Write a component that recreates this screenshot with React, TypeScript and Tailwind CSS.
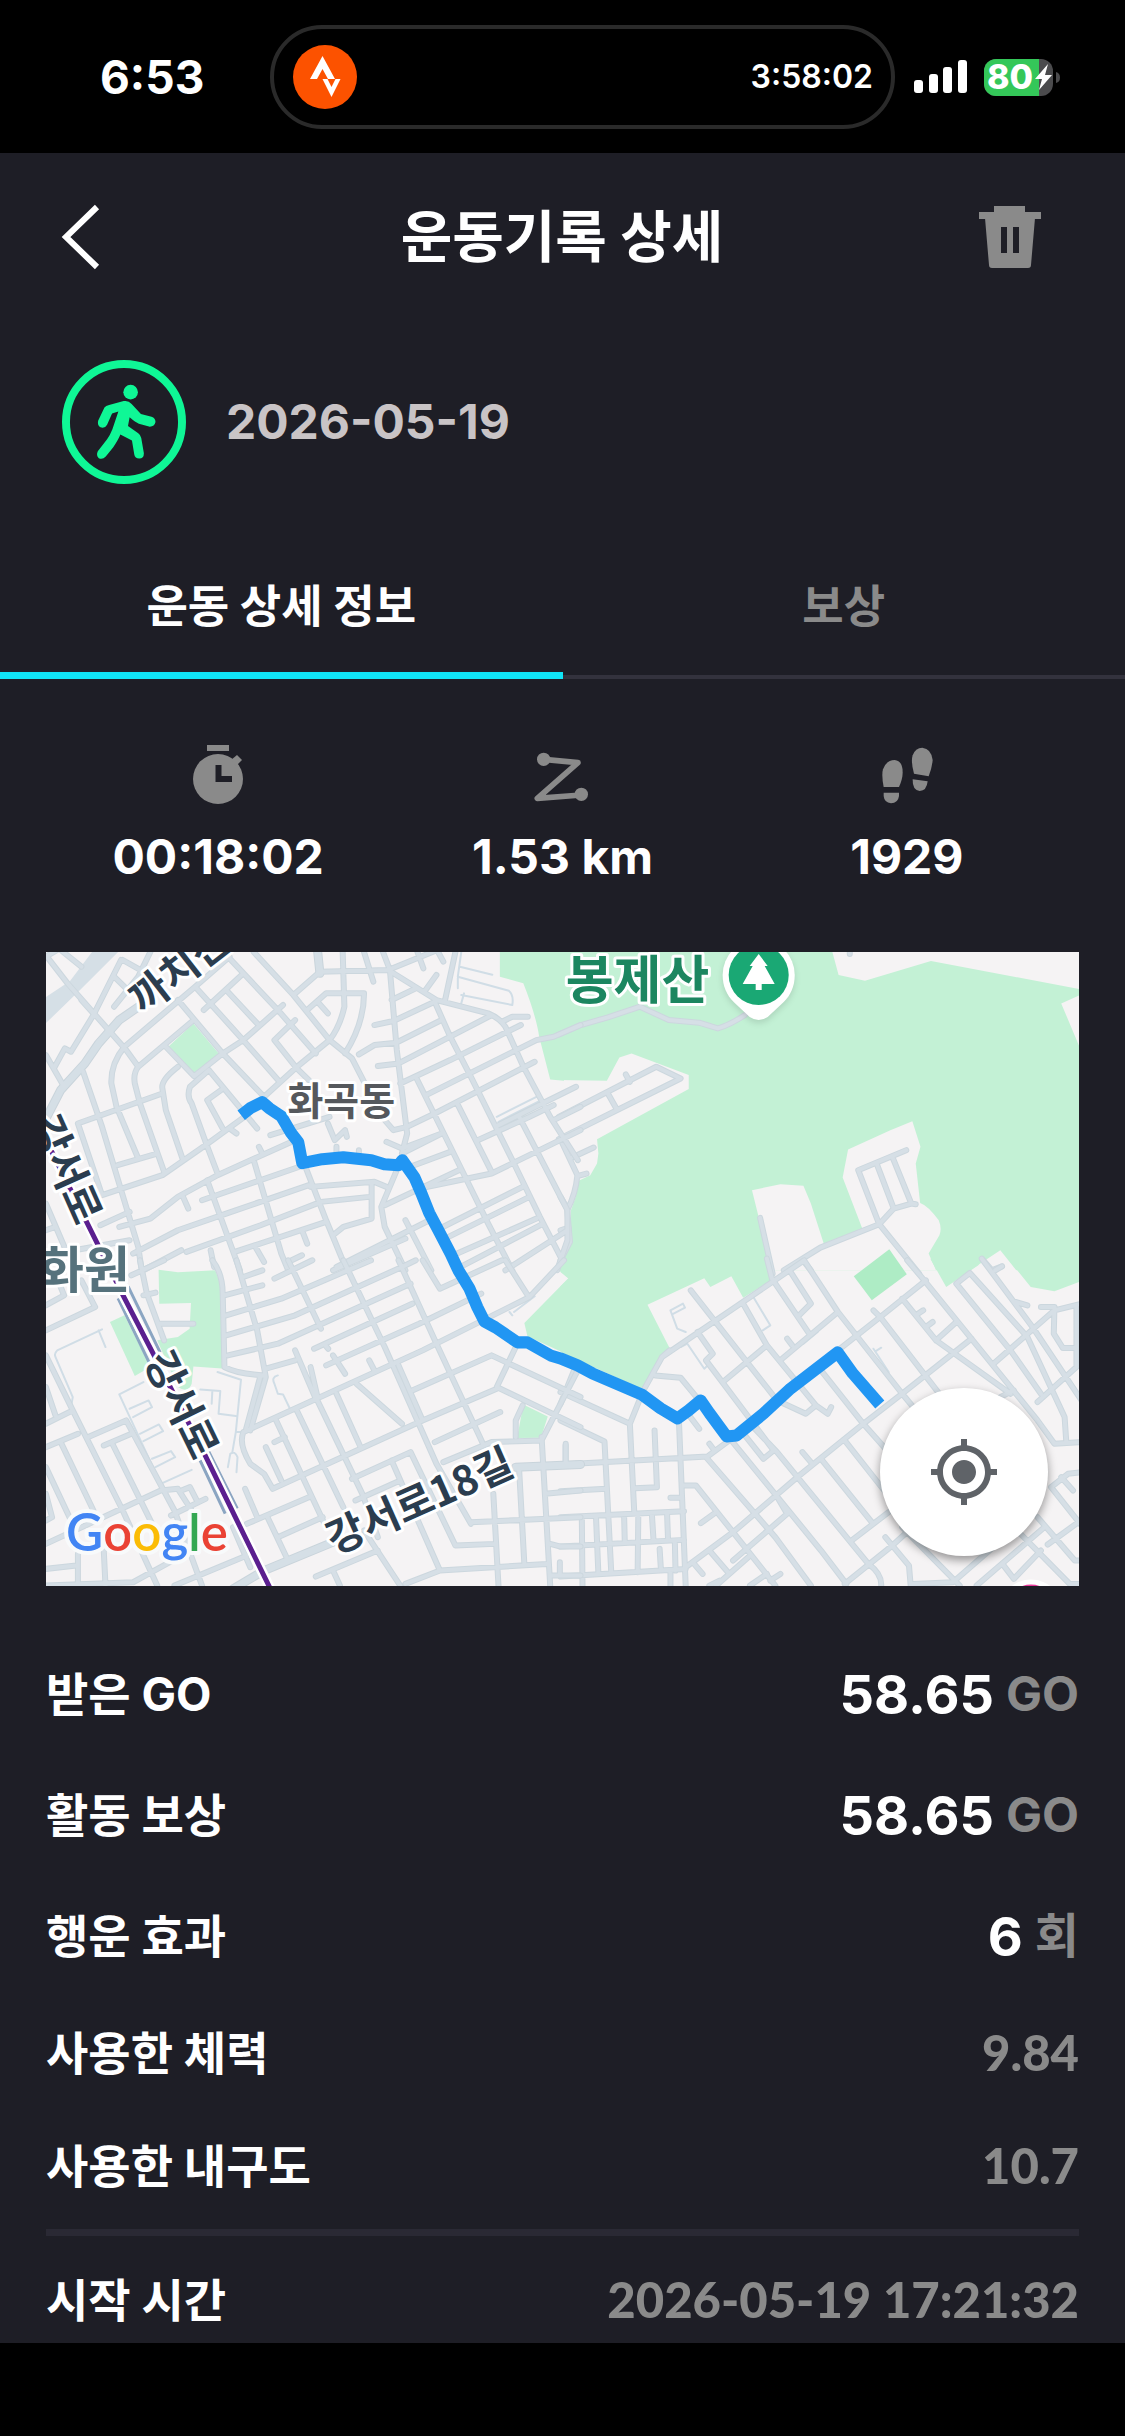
import React, { useState } from 'react'
import { MdMyLocation } from 'react-icons/md'

type TabKey = 'detail' | 'reward'

const TABS: { key: TabKey; label: string }[] = [
  { key: 'detail', label: '운동 상세 정보' },
  { key: 'reward', label: '보상' },
]

const REWARDS: { label: string; value: string; unit: string }[] = [
  { label: '받은 GO', value: '58.65', unit: 'GO' },
  { label: '활동 보상', value: '58.65', unit: 'GO' },
  { label: '행운 효과', value: '6', unit: '회' },
]

const COSTS: { label: string; value: string }[] = [
  { label: '사용한 체력', value: '9.84' },
  { label: '사용한 내구도', value: '10.7' },
]

/* ---------- Map data ---------- */

interface Tile {
  transform: string
  land?: string
  parks: string
  roads: string
  wide?: string
  thin?: string
}

// Each tile keeps its own coordinate grid, the transform puts it on the map
const TILES: Tile[] = [
  {
    transform: 'translate(560 940) scale(.338 .3333)',
    parks: 'M0 30H1540V990H0Z',
    land:
      'M802 30L822 105L900 122L1095 63L1540 148V30Z M1540 163L1480 190L1540 335Z ' +
      'M-10 420L137 422L174 352L210 340L379 405V447L108 597L112 640L108 670L88 705L54 722L35 830L32 900L10 960L-10 990Z ' +
      'M566 750L650 732L718 737L740 790L778 910L892 865L834 712L850 628L975 570L1040 543L1064 620L1050 670L1063 788Q1085 795 1118 840Q1128 865 1120 885L1088 940L1110 990H625Z ' +
      'M1205 994L1300 930L1350 994Z',
    roads:
      'M-5 283L60 255L140 232L235 200L320 240L410 248L465 265Q500 255 545 225 M-5 530L283 380L355 415L-5 597 M140 460L165 505 M193 403L205 425 ' +
      'M0 597L50 705Q45 760 20 810L28 905L0 960 M28 655L98 622 M50 708L77 700 M0 770L20 805 M0 870L25 862 M590 833L627 1000 ' +
      'M660 990L768 922L942 852L1060 1000 M880 690L942 852L985 805L1037 790L1050 792 M880 690L1022 630 M935 672L985 805 M983 655L1037 790 ' +
      'M720 965L740 990 M1248 958L1275 990L1305 978 M855 36L855 42',
  },
  {
    transform: 'translate(40 940) scale(.3444 .3333)',
    parks:
      'M372 320L445 250L522 345L447 408Z M1334 30V110L1402 130Q1440 230 1448 290L1480 418L1520 422V30Z M1568 730L1540 810V900L1500 994H1568Z',
    roads:
      'M20 50L80 130L250 330L285 380 M60 30L120 80 M17 50L50 30 M120 180L155 220 M235 60L155 225L90 335L72 325L40 385 M215 110L255 150 M240 60L300 95 M320 36L285 110L215 200 ' +
      'M17 345L70 440 M450 140L245 320Q205 370 207 430L222 500L285 655 M440 245L285 380Q270 400 275 430L290 490L360 695 M400 380Q350 420 355 445L365 510L415 660 ' +
      'M125 395L180 560L285 920L295 990 M110 550L355 460 M110 550L180 765L355 705L480 615L600 525 M225 675L340 640 M365 320L447 408L530 340L590 300L705 195 ' +
      'M490 390L435 440Q425 470 440 490L482 610L515 700 M525 450L485 480L530 565 M550 565L570 580 M400 180L530 340L650 470 M450 140L585 295L695 425 M540 150L630 250 ' +
      'M545 50L690 210L800 340 M590 100L475 210 M450 140L550 50 M620 36L735 165L840 300L905 355L940 425 M490 390L630 565 M650 470L740 385L840 300 ' +
      'M740 240L680 300L745 385L780 420 M735 165L812 95L1010 90L1200 10 M878 36L883 200Q870 260 840 300 M775 210L830 160L940 160Q940 250 885 340 M805 185L835 220 ' +
      'M940 36L967 125 M995 36L1015 90L1035 330L1065 580L1050 640 M1010 90L1150 180L1300 220Q1335 235 1350 260L1400 375L1480 530L1560 660 M1205 36L1175 180 M1095 36L1112 85 M1155 36L1170 65 M1115 155L1150 105 ' +
      'M1020 180L1090 145 M970 255L1025 243L1145 185 M925 343L970 315L1033 308L1165 240 M980 378L1040 370L1305 228 M1340 245L1370 230H1415 M1045 430L1190 360L1395 255 ' +
      'M1145 185L1190 290L1250 410L1375 670L1450 830L1510 950 M1090 410L1200 640L1300 850L1370 990 M1120 465L1440 300L1490 290L1568 255 M1145 520L1435 365 M1000 540L1025 570L1065 560L1145 520 ' +
      'M1050 640L1165 580 M1210 490L1310 695 M1390 530L1530 810V900L1500 990 M1330 555L1555 440 M1270 600L1420 530L1490 495 M1310 700L1568 570 M1060 685L1190 635 M1100 745L1310 700 M1490 540L1568 500 ' +
      'M1000 795L1215 690 M1150 870L1400 740 M1185 890L1420 770 M1210 940L1440 835 M1220 980L1460 850 M1350 990L1530 870 M860 980L1130 840 M850 990L1060 895 ' +
      'M230 860L320 835L400 770L515 705L740 600 M470 780L780 670 M270 940L400 870L540 820L780 735 M300 990L410 930 M425 935L640 855L815 785L955 770 ' +
      'M565 935L830 845 M620 660L700 940L720 990 M485 720L580 990 M770 680L830 840L890 990 M785 740L970 725L1005 740 M962 730V835L880 860L850 885 M1035 690L990 800L1000 860L1060 990 M1060 840L1135 990 ' +
      'M635 620L645 640 M760 870L775 910 M625 920L650 965 M730 960L760 945 M495 930L505 980 M415 770L430 805 M668 585L840 530 M835 550L855 600L885 570L890 590 M860 620V640 M925 630V640 M1005 605L1050 625L1165 580 ' +
      'M17 790L75 930 M17 870L45 860 M175 855L260 815 M100 930L260 900',
    wide: 'M5 560L60 450L130 370L170 310L230 240L300 190 M805 30L812 100',
    thin:
      'M1222 36L1212 110L1360 152Q1375 165 1370 195L1222 165 M1230 160L1222 190 M1212 115L1212 145 M1218 80L1312 104 M1325 530L1440 470 M1330 545L1450 482',
  },
  {
    transform: 'translate(560 1260) scale(.338 .3333)',
    parks:
      'M0 -5V35L24 55L0 78V275L245 388L300 290L322 262L257 133L425 54L443 80L505 48L540 112L622 60L610 -5Z M1093 -5L1140 80L1235 15L1244 -5Z M1322 -5L1390 80L1460 93L1540 62V-5Z',
    roads:
      'M610 -5L625 55 M300 290L720 0 M322 270L300 290L245 390L205 490L218 755 M0 395L205 490 M40 330L0 430 M0 480L130 543L150 935 M0 612L435 588L505 535 M820 270L945 170L1080 60 ' +
      'M370 920L510 815L700 650L895 490L1010 400L1215 235 M840 970L975 860L1040 800 M480 365L610 255 M655 295L820 155 M860 840L970 755 M1280 310L1325 270L1460 150L1540 130 M1410 425L1525 320V140 M1110 240L1170 185 ' +
      'M385 90L640 420L725 460L755 435 M405 215L450 280L430 300L630 570L600 595L545 525 M540 130L610 255L755 435L790 460L800 440 M625 55L735 220 M680 35L740 130L705 165 M720 0L820 155L1010 400L1140 560 M770 330L895 490 ' +
      'M1025 0L1075 60L1410 480L1460 550L1540 545 M1245 -5L1395 200L1540 420 M1170 70L1210 38L1380 230L1490 470L1495 545 M1170 70L1330 270L1420 400 M1010 115L1110 240L1330 400 M925 150L945 170L1150 440 ' +
      'M1050 165L1072 150 M1080 200L1100 185 M1285 30L1305 18 M1345 125L1380 135 M1420 140H1460L1458 220L1485 263H1525 ' +
      'M430 590L635 830L740 975 M505 540L770 870L845 970 M570 500L640 575L910 910Q950 940 948 975 M770 595L920 785 M715 575L740 605 M840 540L980 720 M895 490L1000 610 M960 830L1030 915L1035 975 M1010 800L1180 975 ' +
      'M510 815L635 975 M440 870L495 935 M395 910L420 940 M460 975L555 890 M440 975L470 960 M560 975L610 940 M620 960L650 940 M635 700L670 760L510 900 M440 550L455 570 M670 235L685 255 ' +
      'M0 692L135 685 M0 770L365 752 M0 858L365 838 M0 948L370 925 M350 480L370 975 M278 510L285 680L220 683 M63 770L65 975 M105 770L112 940 M188 765L190 845 M230 765L228 935 M270 760L275 840 M315 760L318 840 M338 845L340 930 M293 865L297 930 M325 930V975 M15 555V605 ' +
      'M280 345L355 352L410 420 M380 465L410 505 M365 675H400L510 815 M415 788L460 755 M325 712H355 ' +
      'M1450 680L1500 640L1540 635 M1450 680L1540 795 M1480 650L1515 690 M1410 770L1520 900H1540 M1440 852L1540 778 M1230 975L1430 800 M1350 810L1505 970H1540 M1310 915L1340 955L1420 870 M1040 970L1160 965L1290 850 M1300 410L1340 390',
    thin: 'M330 162L368 142L362 130L325 150L345 205L370 215 M355 260L375 250L425 325L435 315 M570 110L620 195L598 210 M925 265L970 335 M932 272L948 262 M718 250L760 215',
  },
  {
    transform: 'translate(40 1260) scale(.3444 .3333)',
    parks:
      'M344 28L400 36L508 30L525 70L528 324L445 318L440 370Q430 400 400 380L340 240L400 230L434 205L438 128L346 130Z M203 185L245 165L320 320L275 347Z M1402 432L1473 468L1453 532L1384 533Z ' +
      'M1512 -5V35L1534 52L1405 188L1414 228L1568 300V-5Z',
    roads:
      'M17 210L160 140L120 60 M17 135L70 105L60 80 M17 490L95 450 M17 285L95 450L240 750L340 975 M17 380L45 465 M60 545L155 750 M17 560L110 520 M185 555L265 520 M140 530L250 480L390 750L470 975 M210 550L330 800 ' +
      'M17 620L90 780 M17 850L350 690L400 685L440 750 M410 690L435 680L455 720 M380 765L480 715 M17 925L105 915 M17 975L270 965L350 920L420 880 M390 975L600 885 M290 0L310 100L360 240 M300 105L335 97 M345 190H445 M265 45L360 0 ' +
      'M500 0Q530 40 530 100L535 320Q570 340 650 345 M570 0L630 210L655 350L610 510 M640 345L598 505 M590 50L645 30 M535 105L645 75 M540 165L700 115L960 0 M540 225L740 165L1050 20L1090 0 M545 285L690 250L1075 70 M680 55L790 0 ' +
      'M720 0L815 205 M880 0L1000 260L1150 610L1250 790 M1040 0L1150 250L1285 550 M1110 0L1160 85L1340 0 M795 265L1080 130 M830 258L836 265 M830 315L1100 190L1280 100 M655 325L740 300 M740 270L800 415 M785 320L805 410 M850 285L885 340 M955 300L970 330 ' +
      'M590 515L1110 270L1420 110L1520 0 M1350 0L1415 105 M590 515Q575 550 610 610L650 640L675 685L1110 480L1325 385 M1080 390L1310 285L1568 410 M1325 380L1568 500 M1560 330L1455 540L1310 545L1170 605 M1325 380L1380 260 M1145 545L1335 455 M1040 315L1110 480 ' +
      'M685 480L830 800 M745 450L880 740 M860 400L930 560 M800 410L935 700L980 830 M918 370L1050 490 M600 790L780 710 M690 830L820 770 M595 685L630 770 M660 770L715 890 M905 655L1075 575L1205 855L1320 850 M915 720L1045 660 M800 948L980 870 M850 930L870 975 ' +
      'M940 810L1045 975 M1020 600L1160 930L1470 910 M1250 785L1568 770 M1455 530L1480 975 M1390 630L1405 910 M1315 700L1330 975 M1525 550V605 M1465 700L1568 690 M1480 850L1510 858H1568 M1480 945H1568 M1508 905V945 M1060 970L1160 930 ' +
      'M110 880V975 M185 870L190 975 M680 545L710 530 M655 560L700 660 M1380 530V480L1400 435 M560 800L610 920 M17 700L35 770L17 780',
    wide: 'M560 985L650 930L850 845 M1380 620L1568 612',
    thin:
      'M180 207L50 270Q40 280 45 290L95 410L90 440 M170 210L190 260 M300 365L230 402L350 670L440 628 M260 445L315 420L325 440L270 470 M290 520L345 492L357 512L300 542 M325 595L380 572L392 590L335 620 ' +
      'M515 335L583 358L568 515L558 575 M465 387L523 392L518 460L568 467 M500 390L498 430 M568 515H590 M545 620L552 580Q565 570 573 590L570 635 M690 345Q670 350 680 370L690 400L705 402L725 445 M1375 155L1435 108 M1362 155L1370 165',
  },
]

const ROUTE =
  '241,1115 250,1108 262,1102 269,1108 281,1116 291,1133 298,1142 302,1163 322,1159 343,1157 371,1160 384,1164 398,1165 402,1160 414,1177 421,1193 429,1213 438,1230 450,1253 458,1270 469,1288 477,1307 484,1321 495,1327 517,1342 527,1342 550,1355 560,1358 577,1365 592,1373 641,1394 660,1408 677,1418 688,1410 700,1400 709,1413 726,1436 736,1435 763,1413 790,1388 837,1352 852,1373 879,1404'

const RAIL = 'M46 1140L124 1297L155 1357L205 1455L273 1594'

function RoadLayer({ d, color, width }: { d?: string; color: string; width: number }) {
  if (!d) return null
  return (
    <path
      d={d}
      fill="none"
      stroke={color}
      strokeWidth={width}
      strokeLinecap="round"
      strokeLinejoin="round"
      vectorEffect="non-scaling-stroke"
    />
  )
}

function RouteMap() {
  return (
    <div className="relative mx-[46px] mt-[65px] overflow-hidden">
      <svg viewBox="46 952 1032 633" className="block w-full" role="img" aria-label="운동 경로 지도">
        <rect x="46" y="952" width="1032" height="634" fill="#f5f3f4" />
        {TILES.map(t => (
          <g key={t.transform} transform={t.transform}>
            <path d={t.parks} fill="#c3f1d5" />
            {t.land && <path d={t.land} fill="#f5f3f4" />}
          </g>
        ))}
        <path d="M853 1276L888.500 1249L906 1274L871 1300Z" fill="#aeecc5" />
        <path d="M46 997L70 981L92 952H118L80 990L46 1023Z" fill="#d5dfe6" />
        {TILES.map(t => (
          <g key={t.transform} transform={t.transform}>
            <RoadLayer d={t.thin} color="#d0dde6" width={2} />
            <RoadLayer d={t.wide} color="#c9d4db" width={9} />
            <RoadLayer d={t.roads} color="#ccd7de" width={6} />
            <RoadLayer d={t.wide} color="#d5dfe6" width={7} />
            <RoadLayer d={t.roads} color="#d6dfe6" width={4} />
          </g>
        ))}

        {/* Rail line */}
        <g fill="none">
          <path d="M118 1298L149 1362 M128 1286L160 1352 M200 1460L225 1513 M208 1450L237 1508" stroke="#8ba5c2" strokeWidth="3" />
          <path d={RAIL} stroke="#fff" strokeWidth="10" />
          <path d={RAIL} stroke="#5b1f8f" strokeWidth="5" />
        </g>

        <polyline points={ROUTE} fill="none" stroke="#2196f3" strokeWidth="12" strokeLinejoin="round" />

        {/* Place names */}
        <g
          className="font-['Noto_Sans_CJK_KR',sans-serif] font-bold"
          fill="#2b3d4f"
          stroke="#fff"
          strokeWidth="6"
          strokeLinejoin="round"
          paintOrder="stroke"
          textAnchor="middle"
          fontSize="41"
        >
          <text transform="translate(179 969) rotate(-38)" y="15">까치산</text>
          <text transform="translate(67 1169) rotate(66)" y="15">강서로</text>
          <text transform="translate(182 1404) rotate(64)" y="15">강서로</text>
          <text transform="translate(419 1500) rotate(-24)" y="15">강서로18길</text>
          <text x="341" y="1115" fill="#55585c" fontSize="39">화곡동</text>
          <text x="130" y="1288" fill="#56727c" fontSize="50" textAnchor="end">화원</text>
          <text x="637" y="999" fill="#1c8660" fontSize="52">봉제산</text>
        </g>

        {/* Park pin */}
        <g className="drop-shadow-md">
          <path d="M722 975a36 36 0 0 1 72 0c0 11-4 20-11 27l-16 15q-9 6-18 0l-16-15c-7-7-11-16-11-27Z" fill="#fff" />
        </g>
        <circle cx="758" cy="975" r="30" fill="#1aa874" />
        <path d="M758 954l9 12h-3l10 18h-13v6h-6v-6h-13l10-18h-3Z" fill="#fff" />

        <circle cx="1030" cy="1611" r="32" fill="#fff" />
        <circle cx="1030" cy="1611" r="27" fill="#e8389a" />

        <text
          x="66"
          y="1550"
          className="font-['Lato',sans-serif] font-semibold"
          fontSize="51"
          stroke="#f8fafb"
          strokeWidth="8"
          strokeLinejoin="round"
          paintOrder="stroke"
        >
          <tspan fill="#4285f4">G</tspan>
          <tspan fill="#ea4335">o</tspan>
          <tspan fill="#fbbc05">o</tspan>
          <tspan fill="#4285f4">g</tspan>
          <tspan fill="#34a853">l</tspan>
          <tspan fill="#ea4335">e</tspan>
        </text>
      </svg>
      <button
        type="button"
        aria-label="내 위치"
        className="absolute right-[31px] bottom-[30px] flex size-[168px] items-center justify-center rounded-full bg-white text-[#5f6368] shadow-[0_4px_10px_rgba(0,0,0,0.4)]"
      >
        <MdMyLocation className="size-[72px]" />
      </button>
    </div>
  )
}

/* ---------- Icons ---------- */

function StravaIcon() {
  return (
    <svg viewBox="0 0 64 64" className="size-16">
      <circle cx="32" cy="32" r="32" fill="#fc5200" />
      <path d="M29.500 11L42 34H35L29.500 24L24 34H17Z" fill="#fff" />
      <path d="M29.500 34H34.500L38.500 42L42.500 34H47.500L38.500 52Z" fill="#fff" />
    </svg>
  )
}

function WalkIcon() {
  return (
    <svg viewBox="36 29 374 374" className="size-[124px]" fill="#0ff796">
      <circle cx="223" cy="216" r="175" fill="none" stroke="#0ff796" strokeWidth="24" />
      <circle cx="243" cy="126" r="22" />
      <path d="M164 172Q168 167 178 165L222 153Q236 150 246 162L274 192L306 200Q318 204 318 216Q315 230 301 230L268 221Q258 218 240 202L235 228L266 250Q274 256 275 264L283 310Q283 326 269 326Q256 326 254 314L247 272L212 254Q206 270 190 293L168 320Q158 331 147 325Q138 316 144 304L172 268Q180 258 188 238L206 184L187 190L172 224Q166 236 152 232Q142 226 145 212Z" />
    </svg>
  )
}

function TimerIcon() {
  return (
    <svg viewBox="0 0 60 60" className="size-[60px]" fill="#8a8a8a">
      <rect x="19" width="22" height="6" />
      <circle cx="30" cy="34" r="25" />
      <path d="M43 15L49 10L54 15L48 21Z" />
      <path d="M27.500 20H33.500V31H44V37H27.500Z" fill="#1e1e26" />
    </svg>
  )
}

function DistanceIcon() {
  return (
    <svg viewBox="38 15 180 180" className="size-[60px]" fill="#8a8a8a">
      <circle cx="73" cy="58" r="20" />
      <circle cx="186" cy="163" r="20" />
      <path d="M73 58L176 68L54 175L186 165" fill="none" stroke="#8a8a8a" strokeWidth="17" strokeLinejoin="round" />
    </svg>
  )
}

function StepsIcon() {
  return (
    <svg viewBox="1071 15 180 180" className="size-[60px]" fill="#8a8a8a">
      <path d="M1091 141Q1084 105 1089 88Q1099 60 1124 60Q1148 62 1148 97Q1148 118 1137 141Z" />
      <path d="M1091 158H1137V168Q1134 190 1113 190Q1093 188 1091 168Z" />
      <path d="M1182 101Q1172 64 1178 46Q1186 23 1207 23Q1234 26 1238 60Q1236 84 1226 109Z" />
      <path d="M1178 118L1223 124Q1220 153 1199 153Q1177 151 1178 118Z" />
    </svg>
  )
}

const STATS = [
  { name: '시간', value: '00:18:02', Icon: TimerIcon },
  { name: '거리', value: '1.53 km', Icon: DistanceIcon },
  { name: '걸음', value: '1929', Icon: StepsIcon },
]

/* ---------- Sections ---------- */

function StatusBar() {
  return (
    <div className="flex h-[153px] items-start bg-black pt-[25px] pr-[64px] pl-[100px] font-semibold">
      <div className="flex h-[104px] w-[170px] items-center text-[46px] font-bold">6:53</div>
      <div className="flex h-[104px] flex-1 items-center justify-between rounded-full border-4 border-[#2a2a2a] pr-[18px] pl-[19px]">
        <StravaIcon />
        <span className="text-[32px]">3:58:02</span>
      </div>
      <div className="ml-[19px] flex h-[104px] items-center gap-[17px]">
        <svg viewBox="0 0 53 34" className="h-[34px] w-[53px]" fill="#fff">
          <rect y="20" width="9" height="13" rx="3" />
          <rect x="15" y="14" width="9" height="19" rx="3" />
          <rect x="29" y="7" width="9" height="26" rx="3" />
          <rect x="44" width="9" height="33" rx="3" />
        </svg>
        <div className="relative flex h-[37px] w-[77px] items-center">
          <svg viewBox="0 0 77 37" className="absolute inset-0">
            <rect width="69" height="37" rx="12" fill="#4b4b4d" />
            <path d="M12 0H55V37H12A12 12 0 0 1 0 25V12A12 12 0 0 1 12 0Z" fill="#34c759" />
            <path d="M72 13q4 1 4 5.500t-4 5.500Z" fill="#4b4b4d" />
            <path d="M64 5L51 20H58L55 31L68 16H61Z" fill="#fff" />
          </svg>
          <span className="relative pl-[3px] text-[34px] leading-none font-extrabold">80</span>
        </div>
      </div>
    </div>
  )
}

function Header() {
  return (
    <header className="grid h-[168px] grid-cols-[1fr_auto_1fr] items-center pr-[84px] pl-[61px]">
      <button type="button" aria-label="뒤로" className="justify-self-start">
        <svg viewBox="0 0 40 66" className="h-[66px] w-10" fill="none" stroke="#fff" strokeWidth="6">
          <path d="M36 3L5 33L36 63" />
        </svg>
      </button>
      <h1 className="pl-[22px] text-[56px] leading-[80px] font-bold">운동기록 상세</h1>
      <button type="button" aria-label="삭제" className="justify-self-end">
        <svg viewBox="0 0 62 62" className="size-[62px]" fill="#8a8a8a">
          <path d="M15 0H46V6H62V13H0V6H15Z" />
          <path fillRule="evenodd" d="M6 12H56L52 59Q52 62 49 62H13Q10 62 10 59ZM22 21V47H28V21ZM34 21V47H40V21Z" />
        </svg>
      </button>
    </header>
  )
}

export default function App() {
  const [tab, setTab] = useState<TabKey>('detail')

  return (
    <div className="flex min-h-screen flex-col bg-black font-['Inter','Noto_Sans_CJK_KR',sans-serif] text-white">
      <StatusBar />
      <main className="bg-[#1e1e26]">
        <Header />

        {/* Activity */}
        <div className="mt-[39px] flex items-center gap-[40px] px-[62px]">
          <WalkIcon />
          <time className="text-[48px] leading-[60px] font-bold text-[#c9c4c6]">2026-05-19</time>
        </div>

        {/* Tabs */}
        <div role="tablist" className="mt-[58px] flex">
          {TABS.map(t => (
            <button
              key={t.key}
              type="button"
              role="tab"
              aria-selected={tab === t.key}
              onClick={() => setTab(t.key)}
              className={
                tab === t.key
                  ? 'h-[137px] flex-1 border-b-[7px] border-[#10e4f5] text-[45px] font-bold'
                  : 'h-[137px] flex-1 border-b-4 border-[#33323d] pb-[3px] text-[45px] font-bold text-[#8a8a8a]'
              }
            >
              {t.label}
            </button>
          ))}
        </div>

        {/* Summary */}
        <div className="mx-[46px] mt-[66px] grid grid-cols-3">
          {STATS.map(({ name, value, Icon }) => (
            <div key={name} aria-label={name} className="flex flex-col items-center gap-[22px]">
              <Icon />
              <span className="text-[48px] leading-[60px] font-bold">{value}</span>
            </div>
          ))}
        </div>

        <RouteMap />

        {/* Details */}
        <dl className="mx-[46px] mt-[48px] text-[46px] font-bold">
          {REWARDS.map(r => (
            <div key={r.label} className="flex h-[121px] items-center justify-between">
              <dt>{r.label}</dt>
              <dd className="flex items-center gap-[12px]">
                <span className="text-[54px]">{r.value}</span>
                <span className="text-[48px] text-[#8a8a8a]">{r.unit}</span>
              </dd>
            </div>
          ))}
          {COSTS.map(c => (
            <div key={c.label} className="flex h-[113px] items-center justify-between">
              <dt>{c.label}</dt>
              <dd className="font-['Lato',sans-serif] text-[49px] font-black text-[#8a8a8a]">{c.value}</dd>
            </div>
          ))}
          <div className="mt-[6px] flex h-[114px] items-center justify-between border-t-[7px] border-[#2a2934] pt-[22px]">
            <dt>시작 시간</dt>
            <dd className="font-['Lato',sans-serif] text-[49px] font-black text-[#8a8a8a]">2026-05-19 17:21:32</dd>
          </div>
        </dl>
      </main>
    </div>
  )
}
